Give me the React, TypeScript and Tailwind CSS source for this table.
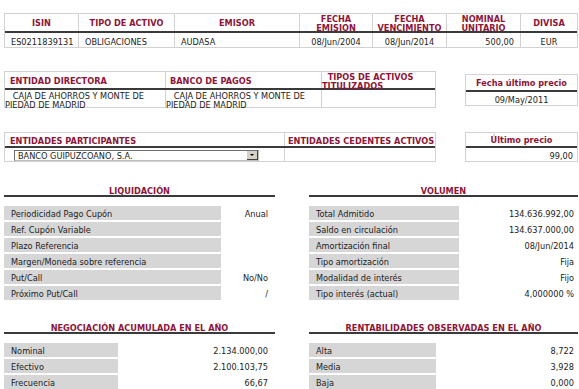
import React from "react";

const red = "text-[#8e1537]";
const bd = "border-[#d2d2d2]";

function Row({ label, value, lw, vw }: { label: string; value: string; lw: string; vw: string }) {
  return (
    <div className="flex h-[14px] items-center">
      <div className={`${lw} h-full bg-[#d6d6d6] pl-[7px] pt-[2px] flex items-center whitespace-nowrap`}>{label}</div>
      <div className={`${vw} h-full pt-[2px] flex items-center justify-end whitespace-nowrap`}>{value}</div>
    </div>
  );
}

function Heading({ children }: { children: React.ReactNode }) {
  return (
    <div>
      <div className={`h-[11px] pt-[2px] leading-[10px] text-center font-bold whitespace-nowrap ${red}`}>{children}</div>
      <div className="h-[2px] bg-[#3a3a3a]" />
    </div>
  );
}

function Line() {
  return <div className="h-[2px] bg-[#3a3a3a]" />;
}

export default function App() {
  const hc = `flex items-center justify-center text-center font-bold leading-[9px] pt-[2px] ${red}`;
  const hl = `flex items-center font-bold leading-[9px] pt-[3px] whitespace-nowrap ${red}`;
  const dc = "flex items-center pt-[3px] whitespace-nowrap";
  return (
    <div className="w-[579px] h-[389px] overflow-hidden bg-white pl-[4px] pt-[13px] text-[8.2px] leading-[10px] text-[#222] font-[family-name:DejaVu_Sans,Verdana,sans-serif]">
      {/* top table */}
      <div className={`w-[574px] border ${bd}`}>
        <div className="flex h-[17px]">
          <div className={`w-[73px] ${hc}`}>ISIN</div>
          <div className={`w-[96px] border-l ${bd} ${hc}`}>TIPO DE ACTIVO</div>
          <div className={`w-[125px] border-l ${bd} ${hc}`}>EMISOR</div>
          <div className={`w-[73px] border-l ${bd} ${hc}`}>FECHA<br />EMISION</div>
          <div className={`w-[74px] border-l ${bd} ${hc}`}>FECHA<br />VENCIMIENTO</div>
          <div className={`w-[74px] border-l ${bd} ${hc}`}>NOMINAL<br />UNITARIO</div>
          <div className={`w-[57px] border-l ${bd} ${hc}`}>DIVISA</div>
        </div>
        <Line />
        <div className="flex h-[14px] items-stretch">
          <div className={`w-[73px] pl-[6px] ${dc}`}>ES0211839131</div>
          <div className={`w-[96px] border-l ${bd} pl-[6px] ${dc}`}>OBLIGACIONES</div>
          <div className={`w-[125px] border-l ${bd} pl-[6px] ${dc}`}>AUDASA</div>
          <div className={`w-[73px] border-l ${bd} ${dc} justify-center`}>08/Jun/2004</div>
          <div className={`w-[74px] border-l ${bd} ${dc} justify-center`}>08/Jun/2014</div>
          <div className={`w-[74px] border-l ${bd} ${dc} justify-end pr-[6px]`}>500,00</div>
          <div className={`w-[57px] border-l ${bd} ${dc} justify-center`}>EUR</div>
        </div>
      </div>

      {/* second block */}
      <div className="flex mt-[23px] items-start">
        <div className={`w-[432px] border ${bd}`}>
          <div className="flex h-[16px]">
            <div className={`w-[160px] pl-[5px] ${hl}`}>ENTIDAD DIRECTORA</div>
            <div className={`w-[156px] border-l ${bd} pl-[4px] ${hl}`}>BANCO DE PAGOS</div>
            <div className={`w-[114px] border-l ${bd} ${hl}`}>
              <span>&nbsp;&nbsp;TIPOS DE ACTIVOS<br />TITULIZADOS</span>
            </div>
          </div>
          <Line />
          <div className="flex h-[17px]">
            <div className="w-[160px] leading-[9px] pt-[2px]">&nbsp;&nbsp;&nbsp;CAJA DE AHORROS Y MONTE DE PIEDAD DE MADRID</div>
            <div className={`w-[156px] border-l ${bd} leading-[9px] pt-[2px]`}>&nbsp;&nbsp;&nbsp;CAJA DE AHORROS Y MONTE DE PIEDAD DE MADRID</div>
            <div className={`w-[114px] border-l ${bd}`} />
          </div>
        </div>
        <div className={`ml-[29px] mt-[3px] w-[113px] border ${bd}`}>
          <div className={`h-[15px] ${hc} whitespace-nowrap`}>Fecha último precio</div>
          <Line />
          <div className={`h-[13px] ${dc} justify-center`}>09/May/2011</div>
        </div>
      </div>

      {/* third block */}
      <div className="flex mt-[24px] items-start">
        <div className={`w-[432px] border ${bd}`}>
          <div className="flex h-[13px]">
            <div className={`w-[279px] pl-[5px] ${hl}`}>ENTIDADES PARTICIPANTES</div>
            <div className={`w-[151px] border-l ${bd} pl-[3px] ${hl}`}>ENTIDADES CEDENTES ACTIVOS</div>
          </div>
          <Line />
          <div className="flex h-[13px]">
            <div className="w-[279px] pl-[9px] pt-[2px]">
              <div className="flex w-[245px] h-[11px] border border-t-[#6f6f6f] border-l-[#6f6f6f] border-r-[#bdbdbd] border-b-[#bdbdbd] bg-white">
                <div className="flex-1 flex items-center pl-[3px] pt-[1px] leading-[9px] whitespace-nowrap">BANCO GUIPUZCOANO, S.A.</div>
                <div className="w-[11px] h-[9px] bg-[#d4d0c8] border-r border-b border-r-[#404040] border-b-[#404040] flex items-center justify-center">
                  <div className="w-0 h-0 border-l-[2px] border-r-[2px] border-t-[2px] border-l-transparent border-r-transparent border-t-black" />
                </div>
              </div>
            </div>
            <div className={`w-[151px] border-l ${bd}`} />
          </div>
        </div>
        <div className={`ml-[29px] w-[113px] border ${bd}`}>
          <div className={`h-[13px] ${hc}`}>Último precio</div>
          <Line />
          <div className={`h-[13px] ${dc} justify-end pr-[4px]`}>99,00</div>
        </div>
      </div>

      {/* sections row 1 */}
      <div className="flex gap-[34px] mt-[22px]">
        <div className="w-[271px]">
          <Heading>LIQUIDACIÓN</Heading>
          <div className="flex flex-col gap-[2px] mt-[9px]">
            <Row lw="w-[217px]" vw="w-[47px]" label="Periodicidad Pago Cupón" value="Anual" />
            <Row lw="w-[217px]" vw="w-[47px]" label="Ref. Cupón Variable" value="" />
            <Row lw="w-[217px]" vw="w-[47px]" label="Plazo Referencia" value="" />
            <Row lw="w-[217px]" vw="w-[47px]" label="Margen/Moneda sobre referencia" value="" />
            <Row lw="w-[217px]" vw="w-[47px]" label="Put/Call" value="No/No" />
            <Row lw="w-[217px]" vw="w-[47px]" label="Próximo Put/Call" value="/" />
          </div>
        </div>
        <div className="w-[269px]">
          <Heading>VOLUMEN</Heading>
          <div className="flex flex-col gap-[2px] mt-[9px]">
            <Row lw="w-[150px]" vw="w-[115px]" label="Total Admitido" value="134.636.992,00" />
            <Row lw="w-[150px]" vw="w-[115px]" label="Saldo en circulación" value="134.637.000,00" />
            <Row lw="w-[150px]" vw="w-[115px]" label="Amortización final" value="08/Jun/2014" />
            <Row lw="w-[150px]" vw="w-[115px]" label="Tipo amortización" value="Fija" />
            <Row lw="w-[150px]" vw="w-[115px]" label="Modalidad de interés" value="Fijo" />
            <Row lw="w-[150px]" vw="w-[115px]" label="Tipo interés (actual)" value="4,000000 %" />
          </div>
        </div>
      </div>

      {/* sections row 2 */}
      <div className="flex gap-[34px] mt-[21px]">
        <div className="w-[271px]">
          <Heading>NEGOCIACIÓN ACUMULADA EN EL AÑO</Heading>
          <div className="flex flex-col gap-[2px] mt-[9px]">
            <Row lw="w-[114px]" vw="w-[150px]" label="Nominal" value="2.134.000,00" />
            <Row lw="w-[114px]" vw="w-[150px]" label="Efectivo" value="2.100.103,75" />
            <Row lw="w-[114px]" vw="w-[150px]" label="Frecuencia" value="66,67" />
          </div>
        </div>
        <div className="w-[269px]">
          <Heading>RENTABILIDADES OBSERVADAS EN EL AÑO</Heading>
          <div className="flex flex-col gap-[2px] mt-[9px]">
            <Row lw="w-[127px]" vw="w-[138px]" label="Alta" value="8,722" />
            <Row lw="w-[127px]" vw="w-[138px]" label="Media" value="3,928" />
            <Row lw="w-[127px]" vw="w-[138px]" label="Baja" value="0,000" />
          </div>
        </div>
      </div>
    </div>
  );
}
